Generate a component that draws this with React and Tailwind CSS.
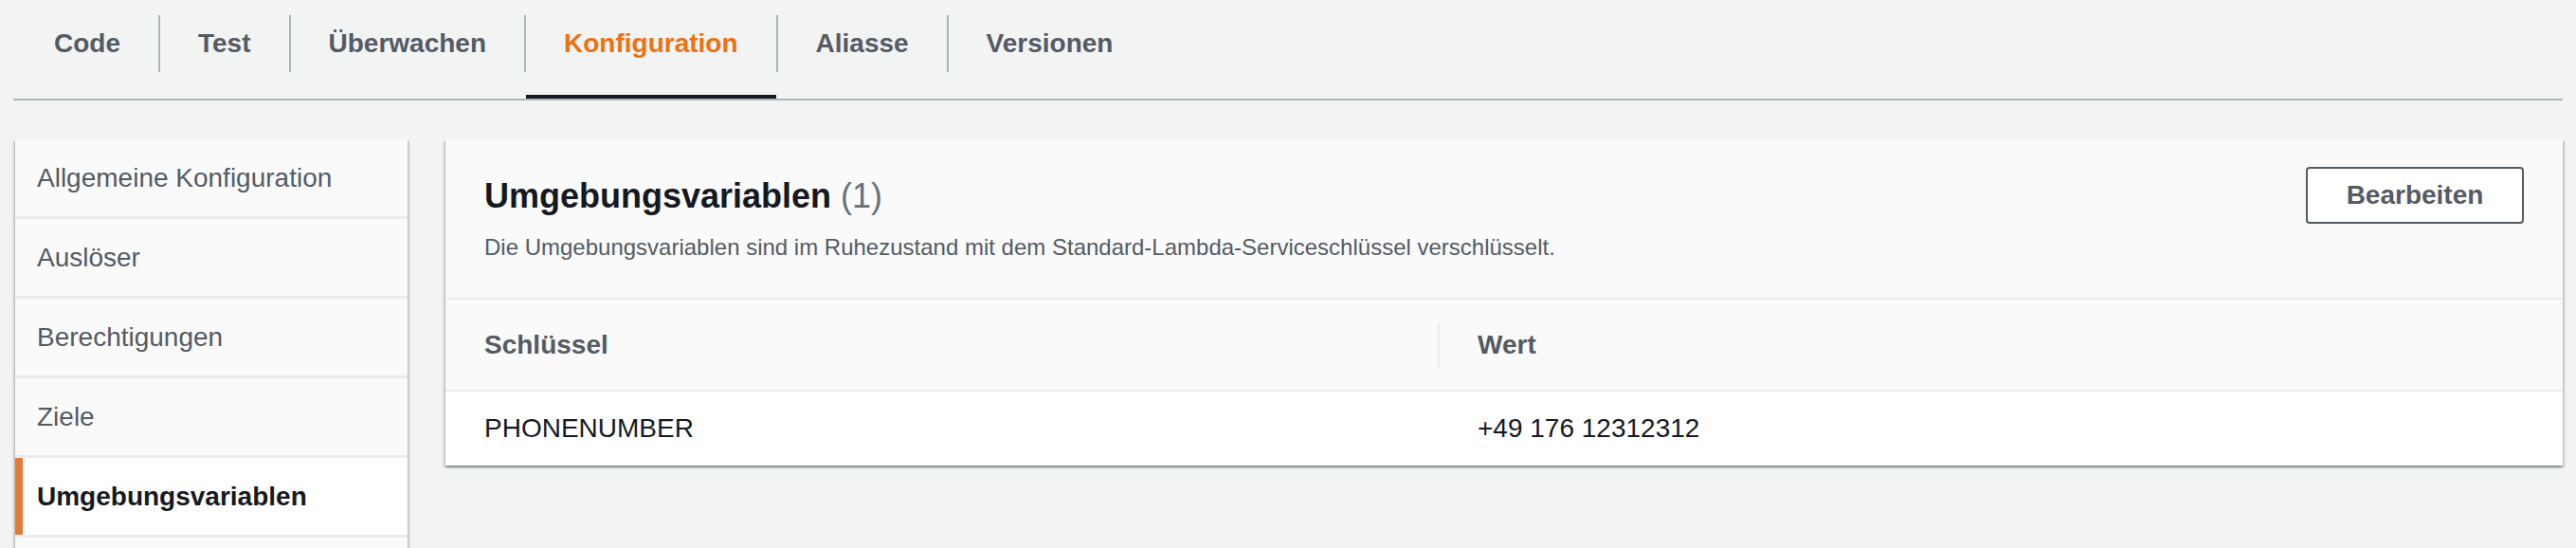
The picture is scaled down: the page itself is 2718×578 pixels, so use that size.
import { Fragment } from "react"

const TABS = ["Code", "Test", "Überwachen", "Konfiguration", "Aliasse", "Versionen"]
const ACTIVE_TAB = "Konfiguration"

// last entry is cut off by the bottom of the frame, no label visible
const NAV = [
  "Allgemeine Konfiguration",
  "Auslöser",
  "Berechtigungen",
  "Ziele",
  "Umgebungsvariablen",
  "",
]
const ACTIVE_NAV = "Umgebungsvariablen"

const SHADOW =
  "shadow-[0_2px_2px_0_rgba(0,28,36,0.3),2px_2px_2px_0_rgba(0,28,36,0.15),-2px_2px_2px_0_rgba(0,28,36,0.15)]"

const Tabs = () => (
  <div className="px-[14px]">
    <div className="flex items-start pl-[3px] border-b-2 border-[#aab7b8]">
      {TABS.map((tab, i) => {
        const isActive = tab === ACTIVE_TAB
        return (
          <Fragment key={tab}>
            {i > 0 && <div className="w-[2px] h-[60px] mt-[16px] bg-[#aab7b8]" />}
            <div
              className={`h-[104px] pb-[8px] px-[40px] flex items-center border-b-4 text-[28px] font-bold ${
                isActive
                  ? "border-[#16191f] text-[#ec7211]"
                  : "border-transparent text-[#545b64]"
              }`}
            >
              {tab}
            </div>
          </Fragment>
        )
      })}
    </div>
  </div>
)

const Sidebar = () => (
  <div className={`w-[414px] shrink-0 flex flex-col gap-[3px] bg-[#eaeded] ${SHADOW}`}>
    {NAV.map((item, i) => {
      const isActive = item === ACTIVE_NAV
      return (
        <div
          key={i}
          className={`h-[81px] flex items-center text-[28px] ${
            isActive
              ? "bg-white border-l-8 border-[#e47a33] pl-[15px] font-bold text-[#16191f]"
              : "bg-[#fafafa] pl-[23px] text-[#545b64]"
          }`}
        >
          {item}
        </div>
      )
    })}
  </div>
)

const EnvCard = () => (
  <div className={`flex-1 self-start bg-[#fafafa] ${SHADOW}`}>
    {/* Header */}
    <div className="flex items-start justify-between pt-[29px] pb-[37px] pl-[41px] pr-[41px] border-b-2 border-[#eaeded]">
      <div>
        <div className="leading-[60px] text-[36px] mt-[1px]">
          <span className="font-bold text-[#16191f]">Umgebungsvariablen</span>{" "}
          <span className="text-[#687078]">(1)</span>
        </div>
        <p className="mt-[8px] leading-[32px] text-[24px] text-[#545b64]">
          Die Umgebungsvariablen sind im Ruhezustand mit dem Standard-Lambda-Serviceschlüssel verschlüsselt.
        </p>
      </div>
      <button className="w-[230px] h-[60px] border-2 border-[#545b64] rounded-[4px] bg-white text-[28px] font-bold text-[#545b64]">
        Bearbeiten
      </button>
    </div>

    {/* Table head */}
    <div className="h-[97px] flex items-center border-b-2 border-[#eaeded] text-[28px] font-bold text-[#545b64]">
      <div className="w-[1047px] pl-[41px]">Schlüssel</div>
      <div className="w-[2px] h-[48px] bg-[#eaeded]" />
      <div className="pl-[40px]">Wert</div>
    </div>

    {/* Row */}
    <div className="h-[78px] flex items-center bg-white text-[28px] text-[#16191f]">
      <div className="w-[1047px] pl-[41px]">PHONENUMBER</div>
      <div className="w-[2px]" />
      <div className="pl-[40px]">+49 176 12312312</div>
    </div>
  </div>
)

export default function App() {
  return (
    <div
      className="min-h-[578px] w-full bg-[#f2f3f3] overflow-hidden"
      style={{ fontFamily: '"Liberation Sans", Arial, sans-serif' }}
    >
      <Tabs />
      <div className="flex items-start gap-[40px] pl-[16px] pr-[14px] pt-[41px]">
        <Sidebar />
        <EnvCard />
      </div>
    </div>
  )
}
